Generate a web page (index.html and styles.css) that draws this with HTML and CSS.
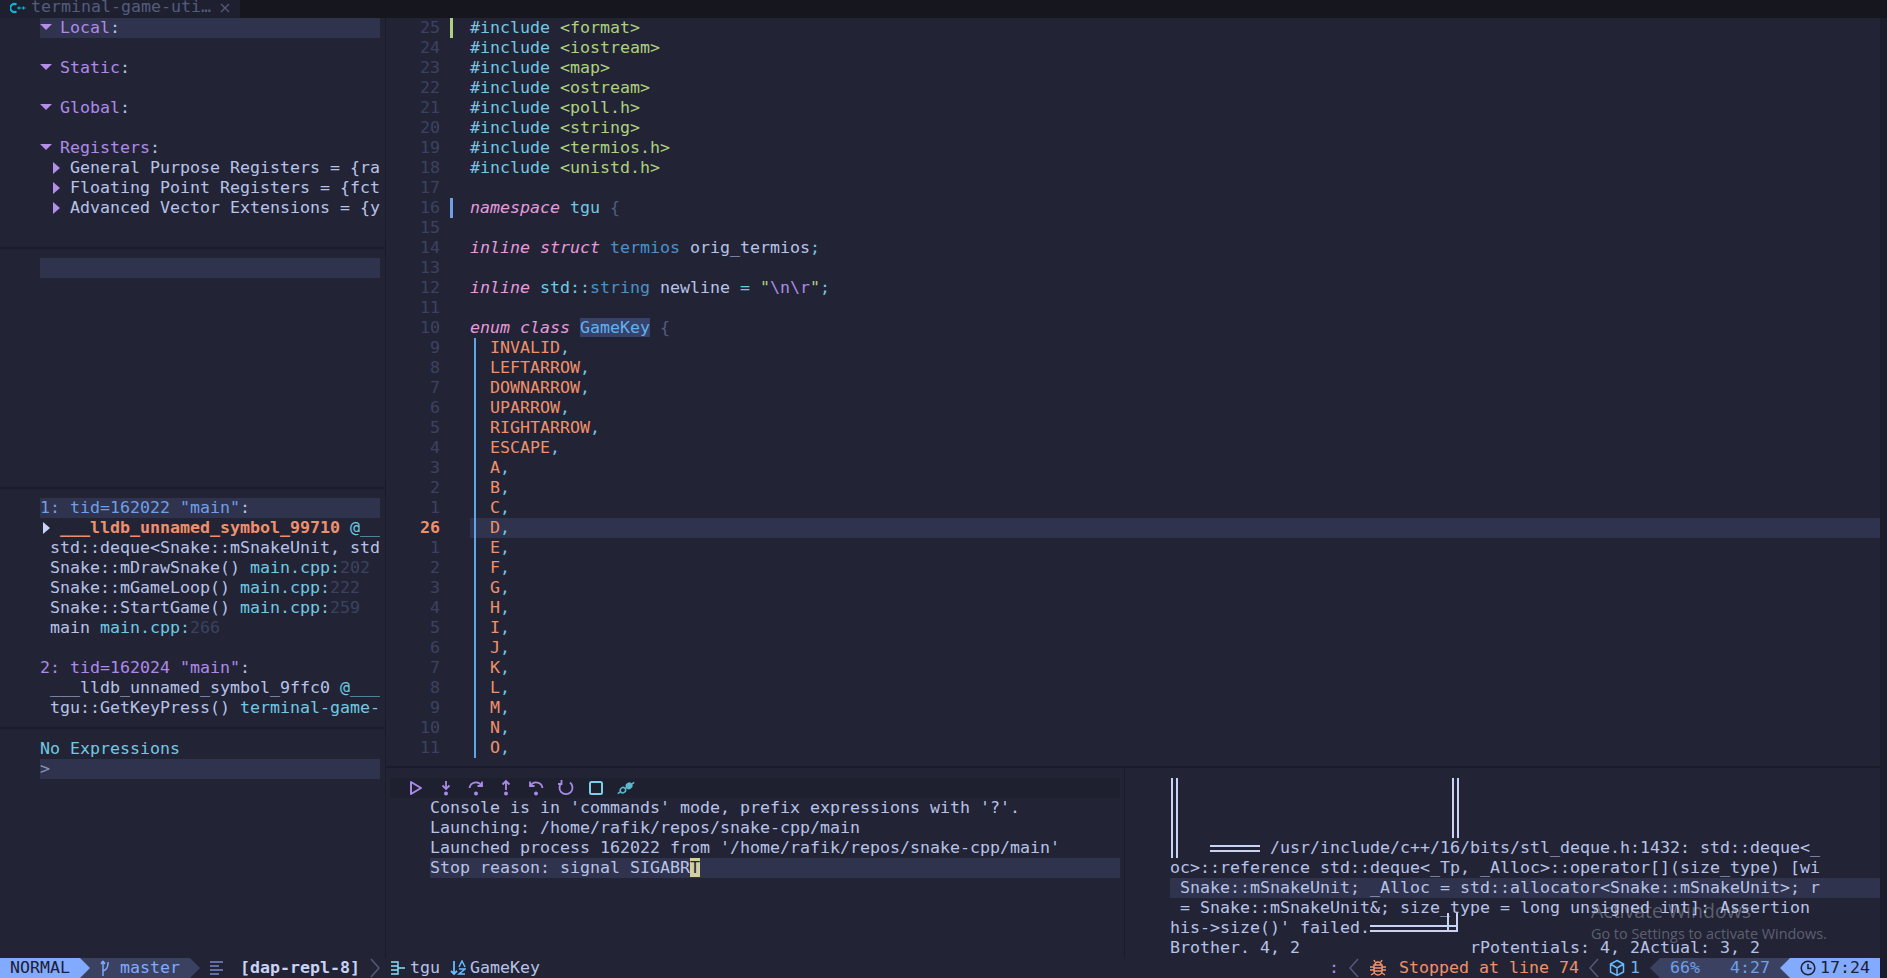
FILE: index.html
```html
<!DOCTYPE html>
<html lang="en">
<head>
<meta charset="utf-8">
<title>nvim dap</title>
<link rel="stylesheet" href="styles.css">
</head>
<body>
<div class="term">
  <header class="tabline">
    <div class="tab">
      <svg class="tab-icon" viewBox="0 0 16 12" width="16" height="12"><path d="M6.5 2.6A4 4 0 1 0 6.5 9.4" fill="none" stroke="#0db9d7" stroke-width="2"/><path d="M7 6h4M9 4.5v3M11.5 6h4M13.5 4.5v3" stroke="#0db9d7" stroke-width="1.2"/></svg>
      <span class="tab-name">terminal-game-uti…</span>
      <svg class="tab-close" viewBox="0 0 10 10" width="10" height="10"><path d="M1 1l8 8M9 1l-8 8" stroke="#545c7e" stroke-width="1.2"/></svg>
    </div>
  </header>

  <main class="main">
    <aside class="side">
      <section class="pane scopes">
        <div class="row hl"><svg class="tri down" viewBox="0 0 12 8"><path d="M0 1h12L6 7z"/></svg><span class="head">Local</span><span class="fg">:</span></div>
        <div class="row"></div>
        <div class="row"><svg class="tri down" viewBox="0 0 12 8"><path d="M0 1h12L6 7z"/></svg><span class="head">Static</span><span class="fg">:</span></div>
        <div class="row"></div>
        <div class="row"><svg class="tri down" viewBox="0 0 12 8"><path d="M0 1h12L6 7z"/></svg><span class="head">Global</span><span class="fg">:</span></div>
        <div class="row"></div>
        <div class="row"><svg class="tri down" viewBox="0 0 12 8"><path d="M0 1h12L6 7z"/></svg><span class="head">Registers</span><span class="fg">:</span></div>
        <div class="row sub"><svg class="tri right" viewBox="0 0 7 12"><path d="M0 0l7 6-7 6z"/></svg><span class="fg">General Purpose Registers = {ra</span></div>
        <div class="row sub"><svg class="tri right" viewBox="0 0 7 12"><path d="M0 0l7 6-7 6z"/></svg><span class="fg">Floating Point Registers = {fct</span></div>
        <div class="row sub"><svg class="tri right" viewBox="0 0 7 12"><path d="M0 0l7 6-7 6z"/></svg><span class="fg">Advanced Vector Extensions = {y</span></div>
      </section>
      <section class="pane breaks">
        <div class="row hl"></div>
      </section>
      <section class="pane frames">
        <div class="row hl"><span class="blue">1: tid=162022 "main"</span><span class="fg">:</span></div>
        <div class="row frame-current"><svg class="tri current" viewBox="0 0 7 12"><path d="M0 0l7 6-7 6z"/></svg><span class="orange bold">___lldb_unnamed_symbol_99710</span><span class="cyan"> @__</span></div>
        <div class="row frame"><span class="fg">std::deque&lt;Snake::mSnakeUnit, std</span></div>
        <div class="row frame"><span class="fg">Snake::mDrawSnake() </span><span class="cyan">main.cpp:</span><span class="num">202</span></div>
        <div class="row frame"><span class="fg">Snake::mGameLoop() </span><span class="cyan">main.cpp:</span><span class="num">222</span></div>
        <div class="row frame"><span class="fg">Snake::StartGame() </span><span class="cyan">main.cpp:</span><span class="num">259</span></div>
        <div class="row frame"><span class="fg">main </span><span class="cyan">main.cpp:</span><span class="num">266</span></div>
        <div class="row"></div>
        <div class="row"><span class="head">2: tid=162024 "main"</span><span class="fg">:</span></div>
        <div class="row frame"><span class="fg">___lldb_unnamed_symbol_9ffc0 </span><span class="cyan">@___</span></div>
        <div class="row frame"><span class="fg">tgu::GetKeyPress() </span><span class="cyan">terminal-game-</span></div>
      </section>
      <section class="pane exprs">
        <div class="row"><span class="cyan">No Expressions</span></div>
        <div class="row hl"><span class="dim">&gt;</span></div>
      </section>
    </aside>

    <div class="work">
      <section class="code">
        <div class="line"><span class="ln">25</span><span class="sign add"></span><span class="src"><span class="cyan">#include</span> <span class="green">&lt;format&gt;</span></span></div>
        <div class="line"><span class="ln">24</span><span class="sign"></span><span class="src"><span class="cyan">#include</span> <span class="green">&lt;iostream&gt;</span></span></div>
        <div class="line"><span class="ln">23</span><span class="sign"></span><span class="src"><span class="cyan">#include</span> <span class="green">&lt;map&gt;</span></span></div>
        <div class="line"><span class="ln">22</span><span class="sign"></span><span class="src"><span class="cyan">#include</span> <span class="green">&lt;ostream&gt;</span></span></div>
        <div class="line"><span class="ln">21</span><span class="sign"></span><span class="src"><span class="cyan">#include</span> <span class="green">&lt;poll.h&gt;</span></span></div>
        <div class="line"><span class="ln">20</span><span class="sign"></span><span class="src"><span class="cyan">#include</span> <span class="green">&lt;string&gt;</span></span></div>
        <div class="line"><span class="ln">19</span><span class="sign"></span><span class="src"><span class="cyan">#include</span> <span class="green">&lt;termios.h&gt;</span></span></div>
        <div class="line"><span class="ln">18</span><span class="sign"></span><span class="src"><span class="cyan">#include</span> <span class="green">&lt;unistd.h&gt;</span></span></div>
        <div class="line"><span class="ln">17</span><span class="sign"></span><span class="src"></span></div>
        <div class="line"><span class="ln">16</span><span class="sign chg"></span><span class="src"><span class="kw">namespace</span> <span class="cyan">tgu</span> <span class="brace">{</span></span></div>
        <div class="line"><span class="ln">15</span><span class="sign"></span><span class="src"></span></div>
        <div class="line"><span class="ln">14</span><span class="sign"></span><span class="src"><span class="kw">inline</span> <span class="kw">struct</span> <span class="type">termios</span> <span class="fg">orig_termios</span><span class="cyan">;</span></span></div>
        <div class="line"><span class="ln">13</span><span class="sign"></span><span class="src"></span></div>
        <div class="line"><span class="ln">12</span><span class="sign"></span><span class="src"><span class="kw">inline</span> <span class="cyan">std::</span><span class="type">string</span> <span class="fg">newline</span> <span class="cyan">=</span> <span class="green">"</span><span class="head">\n\r</span><span class="green">"</span><span class="cyan">;</span></span></div>
        <div class="line"><span class="ln">11</span><span class="sign"></span><span class="src"></span></div>
        <div class="line"><span class="ln">10</span><span class="sign"></span><span class="src"><span class="kw">enum</span> <span class="kw">class</span> <span class="match">GameKey</span> <span class="brace">{</span></span></div>
        <div class="line"><span class="ln">9</span><span class="sign"></span><span class="src"><span class="guide"></span><span class="orange">INVALID</span><span class="cyan">,</span></span></div>
        <div class="line"><span class="ln">8</span><span class="sign"></span><span class="src"><span class="guide"></span><span class="orange">LEFTARROW</span><span class="cyan">,</span></span></div>
        <div class="line"><span class="ln">7</span><span class="sign"></span><span class="src"><span class="guide"></span><span class="orange">DOWNARROW</span><span class="cyan">,</span></span></div>
        <div class="line"><span class="ln">6</span><span class="sign"></span><span class="src"><span class="guide"></span><span class="orange">UPARROW</span><span class="cyan">,</span></span></div>
        <div class="line"><span class="ln">5</span><span class="sign"></span><span class="src"><span class="guide"></span><span class="orange">RIGHTARROW</span><span class="cyan">,</span></span></div>
        <div class="line"><span class="ln">4</span><span class="sign"></span><span class="src"><span class="guide"></span><span class="orange">ESCAPE</span><span class="cyan">,</span></span></div>
        <div class="line"><span class="ln">3</span><span class="sign"></span><span class="src"><span class="guide"></span><span class="orange">A</span><span class="cyan">,</span></span></div>
        <div class="line"><span class="ln">2</span><span class="sign"></span><span class="src"><span class="guide"></span><span class="orange">B</span><span class="cyan">,</span></span></div>
        <div class="line"><span class="ln">1</span><span class="sign"></span><span class="src"><span class="guide"></span><span class="orange">C</span><span class="cyan">,</span></span></div>
        <div class="line cur"><span class="ln">26</span><span class="sign"></span><span class="src"><span class="guide"></span><span class="orange">D</span><span class="cyan">,</span></span></div>
        <div class="line"><span class="ln">1</span><span class="sign"></span><span class="src"><span class="guide"></span><span class="orange">E</span><span class="cyan">,</span></span></div>
        <div class="line"><span class="ln">2</span><span class="sign"></span><span class="src"><span class="guide"></span><span class="orange">F</span><span class="cyan">,</span></span></div>
        <div class="line"><span class="ln">3</span><span class="sign"></span><span class="src"><span class="guide"></span><span class="orange">G</span><span class="cyan">,</span></span></div>
        <div class="line"><span class="ln">4</span><span class="sign"></span><span class="src"><span class="guide"></span><span class="orange">H</span><span class="cyan">,</span></span></div>
        <div class="line"><span class="ln">5</span><span class="sign"></span><span class="src"><span class="guide"></span><span class="orange">I</span><span class="cyan">,</span></span></div>
        <div class="line"><span class="ln">6</span><span class="sign"></span><span class="src"><span class="guide"></span><span class="orange">J</span><span class="cyan">,</span></span></div>
        <div class="line"><span class="ln">7</span><span class="sign"></span><span class="src"><span class="guide"></span><span class="orange">K</span><span class="cyan">,</span></span></div>
        <div class="line"><span class="ln">8</span><span class="sign"></span><span class="src"><span class="guide"></span><span class="orange">L</span><span class="cyan">,</span></span></div>
        <div class="line"><span class="ln">9</span><span class="sign"></span><span class="src"><span class="guide"></span><span class="orange">M</span><span class="cyan">,</span></span></div>
        <div class="line"><span class="ln">10</span><span class="sign"></span><span class="src"><span class="guide"></span><span class="orange">N</span><span class="cyan">,</span></span></div>
        <div class="line"><span class="ln">11</span><span class="sign"></span><span class="src"><span class="guide"></span><span class="orange">O</span><span class="cyan">,</span></span></div>
      </section>

      <div class="bottom">
        <section class="console">
          <div class="winbar">
            <svg class="wb" viewBox="0 0 20 20"><path d="M5 4l10 6-10 6z" fill="none" stroke="#a98ae6" stroke-width="2" stroke-linejoin="round"/></svg>
            <svg class="wb" viewBox="0 0 20 20"><path d="M10 3v8M6.500 7.500l3.500 3.500 3.500-3.500" fill="none" stroke="#a98ae6" stroke-width="1.800"/><circle cx="10" cy="15.500" r="2" fill="#a98ae6"/></svg>
            <svg class="wb" viewBox="0 0 20 20"><path d="M3.500 10a6.500 6.500 0 0 1 12-2.500M16 3.500V8h-4.500" fill="none" stroke="#a98ae6" stroke-width="1.800"/><circle cx="10" cy="15.500" r="2" fill="#a98ae6"/></svg>
            <svg class="wb" viewBox="0 0 20 20"><path d="M10 12V3M6.500 6.500L10 3l3.500 3.500" fill="none" stroke="#a98ae6" stroke-width="1.800"/><circle cx="10" cy="15.500" r="2" fill="#a98ae6"/></svg>
            <svg class="wb" viewBox="0 0 20 20"><path d="M16.500 10a6.500 6.500 0 0 0-12-2.500M4 3.500V8h4.500" fill="none" stroke="#a98ae6" stroke-width="1.800"/><circle cx="10" cy="15.500" r="2" fill="#a98ae6"/></svg>
            <svg class="wb" viewBox="0 0 20 20"><path d="M6 4.500A6.500 6.500 0 1 0 14 4.500M5.500 2v4H2" fill="none" stroke="#a98ae6" stroke-width="1.800"/></svg>
            <svg class="wb" viewBox="0 0 20 20"><rect x="4" y="4" width="12" height="12" rx="1.500" fill="none" stroke="#7ad0ea" stroke-width="2"/></svg>
            <svg class="wb" viewBox="0 0 20 20"><g transform="rotate(-35 10 10)" fill="none" stroke="#5bb8cc" stroke-width="1.500"><rect x="3.500" y="7.500" width="5.500" height="5" rx="2.500"/><rect x="11" y="7.500" width="5.500" height="5" rx="2.500" fill="#5bb8cc"/><path d="M0 10h3.500M9 10h2M16.500 10H20"/></g></svg>
          </div>
          <div class="out">Console is in 'commands' mode, prefix expressions with '?'.</div>
          <div class="out">Launching: /home/rafik/repos/snake-cpp/main</div>
          <div class="out">Launched process 162022 from '/home/rafik/repos/snake-cpp/main'</div>
          <div class="out hl">Stop reason: signal SIGABR<span class="cursor">T</span></div>
        </section>

        <section class="output">
          <div class="tty"><span class="vbar"></span><span class="gap27"></span><span class="vbar"></span></div>
          <div class="tty"><span class="vbar"></span><span class="gap27"></span><span class="vbar"></span></div>
          <div class="tty"><span class="vbar"></span><span class="gap27"></span><span class="vbar"></span></div>
          <div class="tty"><span class="vbar"></span><span class="gap3"></span><span class="hbar five"></span> /usr/include/c++/16/bits/stl_deque.h:1432: std::deque&lt;_</div>
          <div class="tty">oc&gt;::reference std::deque&lt;_Tp, _Alloc&gt;::operator[](size_type) [wi</div>
          <div class="tty hl"> Snake::mSnakeUnit; _Alloc = std::allocator&lt;Snake::mSnakeUnit&gt;; r</div>
          <div class="tty"> = Snake::mSnakeUnit&amp;; size_type = long unsigned int]: Assertion</div>
          <div class="tty">his-&gt;size()' failed.<span class="hbar nine"></span></div>
          <div class="tty">Brother. 4, 2<span class="gap17"></span>rPotentials: 4, 2Actual: 3, 2</div>
          <div class="watermark">
            <div class="wm-title">Activate Windows</div>
            <div class="wm-sub">Go to Settings to activate Windows.</div>
          </div>
        </section>
      </div>
    </div>
  </main>

  <footer class="status">
    <span class="mode">NORMAL</span><span class="arrow to-grey"></span>
    <span class="branch"><svg class="ic branch-ic" viewBox="0 0 10 18"><path d="M3 17V2M3 2L1 5M3 2l2 3M3 12c3-1 5-3 5-8M8 3v3" fill="none" stroke="#82aaff" stroke-width="1.400"/></svg><span>master</span></span><span class="arrow to-bg"></span>
    <svg class="ic lines-ic" viewBox="0 0 16 16"><path d="M1 2h13M1 6h9M1 10h13M1 14h9" stroke="#636da6" stroke-width="2"/></svg>
    <span class="file">[dap-repl-8]</span>
    <svg class="ic chev" viewBox="0 0 10 20"><path d="M1 1l8 9-8 9" fill="none" stroke="#545c7e" stroke-width="1.400"/></svg>
    <svg class="ic ns-ic" viewBox="0 0 16 16"><path d="M1 2h7v4H1M1 10h7v4H1M8 8h7M8 4v8" fill="none" stroke="#86e1fc" stroke-width="1.400"/></svg>
    <span class="crumb">tgu</span>
    <svg class="ic enum-ic" viewBox="0 0 16 16"><path d="M4 1v13M1 11l3 3 3-3" fill="none" stroke="#65bcff" stroke-width="1.800"/><path d="M9 7l3-6 3 6M9 9h6l-6 5h6" fill="none" stroke="#65bcff" stroke-width="1.500"/></svg>
    <span class="crumb">GameKey</span>

    <span class="colon">:</span>
    <svg class="ic chev-l" viewBox="0 0 10 20"><path d="M9 1L1 10l8 9" fill="none" stroke="#545c7e" stroke-width="1.400"/></svg>
    <svg class="ic bug-ic" viewBox="0 0 18 18"><path d="M5 6h8v6a4 4 0 0 1-8 0zM6 6a3 3 0 0 1 6 0M6 3L5 1M12 3l1-2M5 8H1M13 8h4M5 11H1M13 11h4M5 14l-3 2M13 14l3 2M5 9h8M5 12h8" fill="none" stroke="#f5906a" stroke-width="1.500"/></svg>
    <span class="stopped">Stopped at line 74</span>
    <svg class="ic chev-l2" viewBox="0 0 10 20"><path d="M9 1L1 10l8 9" fill="none" stroke="#545c7e" stroke-width="1.400"/></svg>
    <svg class="ic cube-ic" viewBox="0 0 16 18"><path d="M8 1.500l6.500 3.500v8L8 16.500 1.500 13V5zM1.500 5L8 9l6.500-4M8 9v7.500" fill="none" stroke="#65bcff" stroke-width="1.500"/></svg>
    <span class="count">1</span>
    <span class="arrow-l from-grey"></span>
    <span class="pos"><span class="pct">66%</span><span class="lc">4:27</span></span>
    <span class="arrow-l from-blue"></span>
    <span class="clock"><svg class="ic clock-ic" viewBox="0 0 16 16"><circle cx="8" cy="8" r="6.800" fill="none" stroke="#1e2030" stroke-width="1.500"/><path d="M8 4v4.500h3.500" fill="none" stroke="#1e2030" stroke-width="1.500"/></svg><span>17:24</span></span>
  </footer>
</div>
</body>
</html>
```
FILE: styles.css
```css
* { box-sizing: border-box; }
html, body { margin: 0; height: 100%; overflow: hidden; }
body {
  background: #1b1d2c;
  color: #b7c2e6;
  font-family: "DejaVu Sans Mono", "Liberation Mono", monospace;
  font-size: 16.61px;
  line-height: 20px;
}
.term { width: 1880px; height: 978px; display: flex; flex-direction: column; background: #222436; }

/* tabline */
.tabline { height: 18px; width: 1887px; flex: none; background: #16161e; overflow: hidden; }
.tab { width: 240px; height: 18px; background: #1e2030; display: flex; align-items: flex-start; padding-left: 10px; }
.tab-icon { flex: none; margin-top: 2px; }
.tab-name { margin-left: 5px; color: #545c7e; white-space: pre; line-height: 14px; }
.tab-close { flex: none; margin-left: 9px; margin-top: 3px; }

.main { flex: 1; display: flex; min-height: 0; }

/* left column */
.side { width: 386px; flex: none; display: flex; flex-direction: column; border-right: 1px solid #1a1c2b; }
.pane { border-bottom: 2px solid #1a1c2b; overflow: hidden; }
.scopes { height: 231px; }
.breaks { height: 240px; padding-top: 9px; }
.frames { height: 240px; padding-top: 9px; }
.exprs { flex: 1; border-bottom: 0; padding-top: 9px; }
.row { height: 20px; margin-left: 40px; width: 340px; white-space: pre; overflow: hidden; display: flex; align-items: flex-start; }
.hl { background: #2f334d; }
.tri { flex: none; fill: #b48ee8; display: block; }
.tri.down { width: 12px; height: 8px; margin: 5px 8px 0 0; }
.tri.right { width: 7px; height: 12px; margin: 4px 10px 0 13px; }
.tri.current { width: 7px; height: 12px; margin: 4px 10px 0 3px; fill: #c8d3f5; }
.frame { padding-left: 10px; }
.row span { flex: none; }
.exprs .row:first-child { margin-top: 1px; }

/* colours */
.fg { color: #b7c2e6; }
.head { color: #ae8ae6; }
.blue { color: #6f9fe8; }
.cyan { color: #72c8e2; }
.green { color: #aed07f; }
.orange { color: #f0906a; }
.bold { font-weight: 700; }
.num { color: #3b4261; }
.dim { color: #8a93bd; }
.kw { color: #e69adb; font-style: italic; }
.type { color: #4d90c6; }
.brace { color: #545c7e; }
.match { background: #37426b; color: #5fb2f0; }

/* code */
.work { flex: 1; min-width: 0; display: flex; flex-direction: column; }
.code { height: 750px; flex: none; overflow: hidden; border-bottom: 2px solid #1a1c2b; }
.line { height: 20px; display: flex; white-space: pre; }
.ln { width: 54px; flex: none; text-align: right; color: #3b4261; }
.sign { width: 30px; flex: none; }
.sign.add::before, .sign.chg::before { content: ""; display: block; width: 3px; height: 20px; margin-left: 10px; background: #aed07f; }
.sign.chg::before { background: #6f9fe8; }
.src { flex: 1; }
.guide { display: inline-block; width: 16px; height: 20px; margin-left: 4px; vertical-align: top; box-shadow: inset 2px 0 #5ba8e8; }
.line.cur .ln { color: #f0906a; font-weight: 700; }
.line.cur .src { background: #2f334d; }

/* bottom panes */
.bottom { flex: 1; min-height: 0; display: flex; }
.console { width: 739px; flex: none; border-right: 1px solid #1a1c2b; padding-top: 10px; }
.winbar { height: 20px; margin-left: 4px; width: 730px; background: #1e2030; display: flex; align-items: center; gap: 10px; padding-left: 16px; }
.wb { width: 20px; height: 20px; flex: none; }
.out { margin-left: 44px; height: 20px; white-space: pre; width: 690px; }
.cursor { background: #d2cfa4; color: #222436; }

.output { flex: 1; min-width: 0; padding-top: 10px; position: relative; }
.tty { height: 20px; margin-left: 45px; white-space: pre; }
.vbar { display: inline-block; width: 7px; height: 20px; margin: 0 2px 0 1px; vertical-align: top; border-left: 2px solid #c8d3f5; border-right: 2px solid #c8d3f5; }
.gap27 { display: inline-block; width: 271px; height: 20px; vertical-align: top; }
.gap3 { display: inline-block; width: 30px; height: 20px; vertical-align: top; }
.gap17 { display: inline-block; width: 170px; }
.hbar { display: inline-block; height: 7px; vertical-align: top; margin-top: 7px; border-top: 2px solid #c8d3f5; border-bottom: 2px solid #c8d3f5; }
.hbar.five { width: 50px; }
.hbar.nine { width: 88px; position: relative; }
.hbar.nine::after { content: ""; position: absolute; right: 0; top: -14px; width: 7px; height: 19px; border-left: 2px solid #c8d3f5; border-right: 2px solid #c8d3f5; }

.watermark { position: absolute; left: 466px; top: 130px; color: rgba(205, 208, 220, .36); font-family: "Open Sans", "Liberation Sans", sans-serif; white-space: nowrap; }
.wm-title { font-size: 19.500px; line-height: 26px; }
.wm-sub { font-size: 14.400px; line-height: 20px; }

/* statusline */
.status { height: 20px; flex: none; display: flex; align-items: flex-start; white-space: pre; overflow: hidden; background: #222436; }
.ic { display: block; flex: none; }
.mode { width: 80px; padding-left: 10px; background: #82aaff; color: #1e2030; flex: none; }
.arrow { width: 10px; height: 20px; flex: none; border-left: 10px solid #82aaff; border-top: 10px solid transparent; border-bottom: 10px solid transparent; }
.to-grey { background: #3b4261; }
.to-bg { border-left-color: #3b4261; }
.branch { width: 100px; background: #3b4261; color: #82aaff; display: flex; padding-left: 10px; flex: none; }
.branch-ic { width: 10px; height: 18px; margin: 1px 10px 0 0; }
.lines-ic { width: 16px; height: 16px; margin: 2px 15px 0 9px; }
.file { color: #c8d3f5; font-weight: 700; width: 120px; flex: none; }
.chev { width: 10px; height: 20px; margin-left: 10px; }
.ns-ic { width: 16px; height: 16px; margin: 2px 4px 0 10px; }
.crumb { color: #b7c2e6; flex: none; }
.enum-ic { width: 16px; height: 16px; margin: 2px 4px 0 10px; }
.colon { margin-left: auto; color: #ae8ae6; width: 10px; flex: none; }
.chev-l { width: 10px; height: 20px; margin-left: 10px; }
.bug-ic { width: 18px; height: 18px; margin: 1px 0 0 10px; }
.stopped { color: #f0906a; margin-left: 12px; width: 180px; flex: none; }
.chev-l2 { width: 10px; height: 20px; margin-left: 10px; }
.cube-ic { width: 16px; height: 18px; margin: 1px 0 0 10px; }
.count { color: #6fb3ee; margin-left: 5px; width: 10px; flex: none; }
.arrow-l { width: 10px; height: 20px; flex: none; border-right: 10px solid #3b4261; border-top: 10px solid transparent; border-bottom: 10px solid transparent; margin-left: 10px; }
.from-blue { border-right-color: #82aaff; background: #3b4261; margin-left: 0; }
.pos { width: 120px; flex: none; background: #3b4261; color: #6f9fe8; display: flex; padding-left: 10px; }
.pct { width: 60px; }
.clock { width: 90px; flex: none; background: #82aaff; color: #1e2030; display: flex; padding-left: 10px; }
.clock-ic { width: 16px; height: 16px; margin: 2px 4px 0 0; }
```
